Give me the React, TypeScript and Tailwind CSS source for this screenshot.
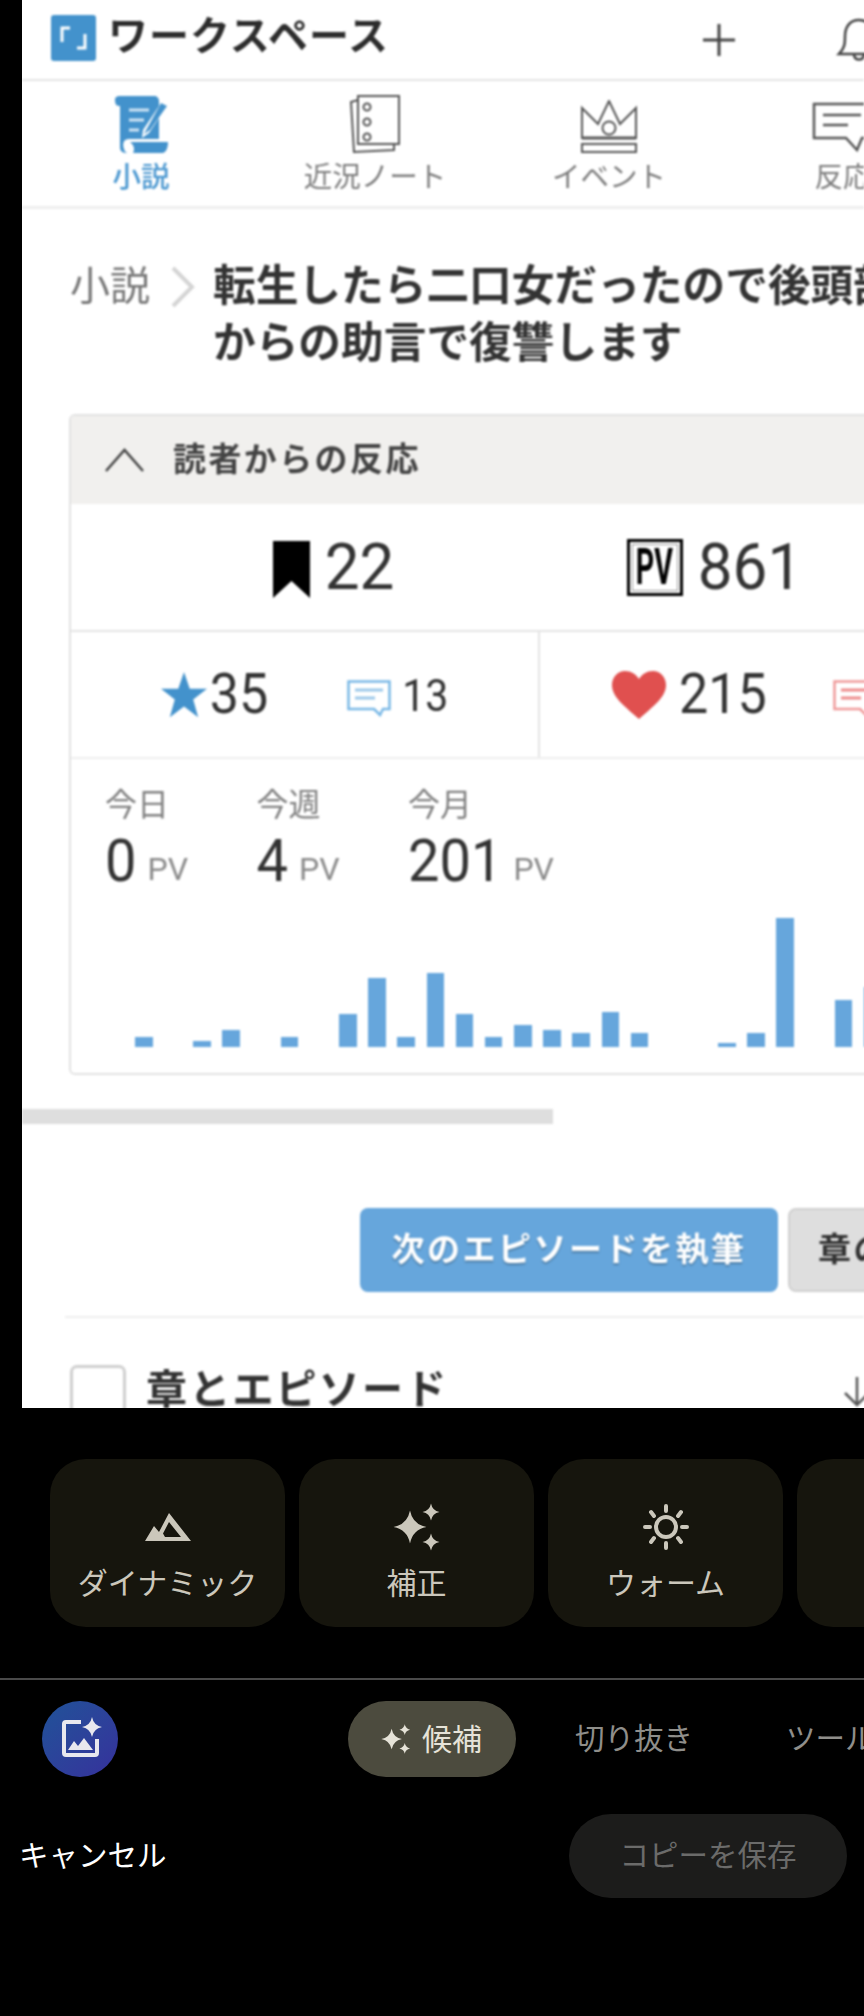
import React from 'react';

const barHeights = [10, 0, 6, 17, 0, 10, 0, 33, 69, 10, 74, 33, 10, 22, 17, 14, 35, 14, 0, 0, 4, 14, 129, 0, 47, 60];

const stats = [
  { label: '今日', value: '0' },
  { label: '今週', value: '4' },
  { label: '今月', value: '201' },
];

const star = (cx: number, cy: number, r: number) =>
  `M${cx} ${cy - r}Q${cx + r * 0.16} ${cy - r * 0.16} ${cx + r} ${cy}Q${cx + r * 0.16} ${cy + r * 0.16} ${cx} ${cy + r}Q${cx - r * 0.16} ${cy + r * 0.16} ${cx - r} ${cy}Q${cx - r * 0.16} ${cy - r * 0.16} ${cx} ${cy - r}Z`;

const Sparkles: React.FC<{ size: number; color: string }> = ({ size, color }) => (
  <svg width={size} height={size} viewBox="0 0 48 48" fill={color}>
    <path d={star(17, 24, 16.5)} />
    <path d={star(38, 9, 8.5)} />
    <path d={star(38, 39, 8.5)} />
  </svg>
);

const ChatIcon: React.FC<{ color: string; light: string }> = ({ color, light }) => (
  <svg width="44" height="37" viewBox="0 0 44 37" fill="none">
    <path d="M1.5 1.5H42.5V29H36L33 35L27 29H1.5Z" stroke={color} strokeWidth="2.5" fill="#fff" />
    <path d="M8 10H36M8 18H28" stroke={light} strokeWidth="3" />
  </svg>
);

const TabLabel: React.FC<{ text: string; active?: boolean; icon: React.ReactNode }> = ({ text, active, icon }) => (
  <div className="w-[234px] shrink-0 flex flex-col items-center">
    <div className="h-[66px] flex items-end">{icon}</div>
    <div className={`mt-[6px] text-[28.5px] leading-[36px] whitespace-nowrap ${active ? 'text-[#4a97d0] font-medium' : 'text-[#7c7c7c]'}`}>{text}</div>
  </div>
);

const Chip: React.FC<{ label: string; icon?: React.ReactNode }> = ({ label, icon }) => (
  <div className="w-[235px] h-[168px] shrink-0 rounded-[36px] bg-[#16150d] flex flex-col items-center">
    <div className="h-[48px] mt-[44px] flex items-center justify-center">{icon}</div>
    <div className="mt-[14px] text-[30px] leading-[38px] text-[#cbc7bb] whitespace-nowrap">{label}</div>
  </div>
);

export default function App() {
  return (
    <div className="w-[864px] h-[2016px] bg-black overflow-hidden font-['Roboto','Noto_Sans_CJK_JP',sans-serif]">
      {/* screenshot being edited */}
      <div className="ml-[22px] w-[842px] h-[1408px] bg-white overflow-hidden">
        <div className="blur-[0.8px]">
          <div className="h-[81px] border-b-2 border-[#e4e4e4] flex items-center pl-[29px]">
            <div className="w-[45px] h-[46px] mb-[4px] rounded-[3px] bg-[#4392cc] shrink-0">
              <svg width="45" height="46" viewBox="0 0 45 46" fill="none" stroke="#fff" strokeWidth="3">
                <path d="M19 13H11V27M26 33H34V19" />
              </svg>
            </div>
            <div className="ml-[12px] w-[282px] mb-[6px] text-[40px] leading-[48px] tracking-[1px] font-bold text-[#2c2c2c] whitespace-nowrap">ワークスペース</div>
            <svg className="ml-[313px] shrink-0" width="34" height="34" viewBox="0 0 34 34" stroke="#444" strokeWidth="3">
              <path d="M17 1V33M1 17H33" />
            </svg>
            <svg className="ml-[100px] shrink-0" width="46" height="46" viewBox="0 0 46 46" fill="none" stroke="#444" strokeWidth="2.5">
              <path d="M3 37C9 31 9 26 9 19C9 10 14 3 23 3C32 3 37 10 37 19C37 26 37 31 43 37ZM18 38C19 44 27 44 28 38" />
            </svg>
          </div>

          <div className="h-[128px] border-b-[3px] border-[#eeeeee] flex pl-[2px] pt-[7px] overflow-hidden">
            <TabLabel
              text="小説"
              active
              icon={
                <svg width="56" height="58" viewBox="0 0 56 58" fill="#4392cc">
                  <path d="M2 4C2 1 4 0 7 0H41C44 0 46 2 46 5V10L30 34L29 42L36 37L46 22V43H16C11 43 9 47 11 53C12 56 13 57 15 57C9 57 7 55 7 51V10H6C3 10 2 7 2 4Z" />
                  <path d="M17 46H55C55 50 54 57 49 57H20C22 53 21 49 17 46Z" />
                  <path d="M48 7L54 10L37 34L31 38Z" />
                  <path d="M16 14H36M16 24H31M16 34H26" stroke="#cfe4f4" strokeWidth="3" />
                </svg>
              }
            />
            <TabLabel
              text="近況ノート"
              icon={
                <svg width="54" height="60" viewBox="0 0 54 60" fill="none" stroke="#555" strokeWidth="2">
                  <path d="M10 2H51V50H10ZM10 6L3 8L6 58L46 56V50" />
                  <circle cx="19" cy="13" r="3.5" />
                  <circle cx="19" cy="28" r="3.5" />
                  <circle cx="19" cy="43" r="3.5" />
                </svg>
              }
            />
            <TabLabel
              text="イベント"
              icon={
                <svg width="56" height="54" viewBox="0 0 56 54" fill="none" stroke="#555" strokeWidth="2">
                  <path d="M1 8L17 24L28 1L39 24L55 8V38H1Z" />
                  <circle cx="28" cy="28" r="6.5" />
                  <path d="M1 38H55" strokeWidth="3" />
                  <path d="M1 44H55V52H1Z" />
                </svg>
              }
            />
            <TabLabel
              text="反応"
              icon={
                <svg width="62" height="52" viewBox="0 0 62 52" fill="none" stroke="#555" strokeWidth="2.5">
                  <path d="M2 2H60V36H50L45 48L34 36H2Z" />
                  <path d="M11 13H49M11 23H36" />
                </svg>
              }
            />
          </div>

          <div className="pt-[49px] pl-[48px] flex items-start whitespace-nowrap">
            <div className="text-[40px] leading-[57px] text-[#777777]">小説</div>
            <svg className="ml-[20px] mt-[8px] shrink-0" width="25" height="42" viewBox="0 0 25 42" fill="none" stroke="#d4d4d4" strokeWidth="4">
              <path d="M3 2L22 21L3 40" />
            </svg>
            <div className="ml-[18px] text-[42.7px] leading-[57px] font-bold text-[#333333]">
              <div>転生したら二口女だったので後頭部</div>
              <div>からの助言で復讐します</div>
            </div>
          </div>

          <div className="mt-[42px] ml-[47px] w-[900px] rounded-md border-2 border-[#e2e2e2] overflow-hidden">
            <div className="h-[88px] bg-[#f1f0ee] flex items-center pl-[33px]">
              <svg width="41" height="24" viewBox="0 0 41 24" fill="none" stroke="#444" strokeWidth="2.5">
                <path d="M2 23L20.5 2L39 23" />
              </svg>
              <div className="ml-[28px] text-[33px] leading-[40px] tracking-[2.4px] font-bold text-[#444444]">読者からの反応</div>
            </div>

            <div className="h-[128px] border-b-2 border-[#e4e4e4] pl-[76px] grid grid-cols-[377px_381px]">
              <div className="flex items-center justify-center text-[62px] text-[#333333]">
                <svg className="mt-[4px] -ml-[4px]" width="37" height="57" viewBox="0 0 37 57" fill="#000">
                  <path d="M0 0H37V57L18.5 40L0 57Z" />
                </svg>
                <span className="ml-[15px] leading-none inline-block scale-y-[1.06]">22</span>
              </div>
              <div className="flex items-center justify-center text-[62px] text-[#333333]">
                <div className="w-[56px] h-[57px] border-[3px] border-black p-[2px]">
                  <div className="w-full h-full border border-[#999999] flex items-center justify-center">
                    <span className="text-[42px] leading-none font-bold text-black inline-block scale-x-[0.68] scale-y-[1.2] whitespace-nowrap">PV</span>
                  </div>
                </div>
                <span className="ml-[15px] leading-none inline-block scale-y-[1.06]">861</span>
              </div>
            </div>

            <div className="h-[127px] border-b-2 border-[#eeeeee] flex">
              <div className="w-[469px] shrink-0 border-r-2 border-[#e4e4e4] flex items-center justify-center text-[#333333]">
                <svg width="46" height="46" viewBox="0 0 24 24" fill="#4392cc">
                  <path d="M12 0L15 8.8H24L16.8 14.4L19.4 23.6L12 18L4.6 23.6L7.2 14.4L0 8.8H9Z" />
                </svg>
                <span className="ml-[3px] text-[52px] leading-none inline-block scale-y-[1.06]">35</span>
                <span className="ml-[79px] mt-[8px]">
                  <ChatIcon color="#79b8e6" light="#9cc9ea" />
                </span>
                <span className="ml-[11px] mt-[4px] text-[41px] leading-none inline-block scale-y-[1.06]">13</span>
              </div>
              <div className="pl-[71px] flex items-center text-[#333333]">
                <svg width="56" height="48" viewBox="0 0 56 48" fill="#e0504f">
                  <path d="M28 48C16 37 1 27 1 14C1 6 7 0 14 0C20 0 25 3 28 8C31 3 36 0 42 0C49 0 55 6 55 14C55 27 40 37 28 48Z" />
                </svg>
                <span className="ml-[12px] text-[52px] leading-none inline-block scale-y-[1.06]">215</span>
                <span className="ml-[66px] mt-[8px]">
                  <ChatIcon color="#f09a9a" light="#ee8c8c" />
                </span>
              </div>
            </div>

            <div className="h-[314px] pl-[34px] pb-[26px] flex flex-col justify-between">
              <div className="flex pt-[28px]">
                {stats.map(s => (
                  <div key={s.label} className="w-[151.5px] shrink-0">
                    <div className="text-[32px] leading-[36px] text-[#808080]">{s.label}</div>
                    <div className="mt-[8px] flex items-baseline leading-[60px] whitespace-nowrap">
                      <span className="text-[56px] text-[#333333] inline-block scale-y-[1.06]">{s.value}</span>
                      <span className="ml-[11px] text-[32px] text-[#8a8a8a]">PV</span>
                    </div>
                  </div>
                ))}
              </div>
              <div className="ml-[30px] h-[130px] flex items-end gap-[11.67px]">
                {barHeights.map((h, i) => (
                  <div key={i} className="w-[17.5px] shrink-0 bg-[#66a6dc]" style={{ height: h }} />
                ))}
              </div>
            </div>
          </div>

          <div className="mt-[34px] w-[531px] h-[15px] bg-[#dedede]" />

          <div className="mt-[84px] pl-[338px] flex gap-[10px] whitespace-nowrap">
            <div className="w-[418px] h-[84px] shrink-0 rounded-[8px] bg-[#66a6dc] flex items-center justify-center text-[33px] tracking-[2.5px] font-bold text-white [text-shadow:0_2px_2px_rgba(0,0,0,0.25)]">
              次のエピソードを執筆
            </div>
            <div className="w-[300px] h-[84px] shrink-0 rounded-[8px] bg-[#dedede] border-2 border-[#d0d0d0] pl-[28px] flex items-center text-[33px] tracking-[2.5px] font-bold text-[#333333]">
              章の追加
            </div>
          </div>

          <div className="mt-[24px] ml-[43px] h-[2px] bg-[#eeeeee]" />

          <div className="mt-[47px] pl-[48px] w-[849px] flex items-start">
            <div className="w-[56px] h-[56px] shrink-0 rounded-[7px] border-[3px] border-[#cfcfcf]" />
            <div className="ml-[20px] text-[41px] leading-[50px] tracking-[2.2px] font-bold text-[#333333] whitespace-nowrap">章とエピソード</div>
            <svg className="ml-auto mt-[12px] shrink-0" width="28" height="30" viewBox="0 0 28 30" fill="none" stroke="#555" strokeWidth="2.5">
              <path d="M14 0V28M2 16L14 28L26 16" />
            </svg>
          </div>
        </div>
      </div>

      {/* editor chrome */}
      <div className="pt-[51px] pl-[50px] flex gap-[14px] overflow-hidden">
        <Chip
          label="ダイナミック"
          icon={
            <svg width="46" height="28" viewBox="0 0 46 28" fill="#cbc7bb">
              <path d="M0 28L9 13L14 19L24 0L46 28ZM13 24H36L24 9L18 20.5L20 24Z" fillRule="evenodd" />
            </svg>
          }
        />
        <Chip label="補正" icon={<Sparkles size={48} color="#cbc7bb" />} />
        <Chip
          label="ウォーム"
          icon={
            <svg width="48" height="48" viewBox="0 0 48 48" fill="none" stroke="#cbc7bb" strokeWidth="4" strokeLinecap="round">
              <circle cx="24" cy="24" r="10" />
              <path d="M24 3V8M24 40V45M3 24H8M40 24H45M9 9L12 13M39 9L36 13M9 39L12 35M39 39L36 35" />
            </svg>
          }
        />
        <Chip label="" />
      </div>

      <div className="mt-[51px] h-[2px] bg-[#4a4a4a]" />

      <div className="mt-[21px] pl-[42px] flex items-center whitespace-nowrap overflow-hidden">
        <div className="w-[76px] h-[76px] shrink-0 rounded-full bg-gradient-to-br from-[#1e5298] to-[#35309c] flex items-center justify-center">
          <svg width="44" height="44" viewBox="0 0 44 44" fill="none">
            <path d="M23 5H8A2 2 0 0 0 6 7V36A2 2 0 0 0 8 38H37A2 2 0 0 0 39 36V22" stroke="#e8e8ee" strokeWidth="4" />
            <path d="M10 33L16 24L20 29L26 21L35 33Z" fill="#e8e8ee" />
            <path d={star(34, 10, 10)} fill="#e8e8ee" />
          </svg>
        </div>
        <div className="ml-[230px] w-[168px] h-[76px] shrink-0 rounded-full bg-[#4c4b3e] pl-[33px] flex items-center">
          <Sparkles size={30} color="#e6e3d8" />
          <span className="ml-[11px] text-[30px] text-[#e6e3d8]">候補</span>
        </div>
        <span className="ml-[59px] text-[29.5px] text-[#8f8e8a]">切り抜き</span>
        <span className="ml-[93px] text-[29.5px] text-[#8f8e8a]">ツール</span>
      </div>

      <div className="mt-[37px] pl-[19px] pr-[17px] flex items-center justify-between">
        <span className="text-[29.5px] text-white">キャンセル</span>
        <div className="w-[278px] h-[84px] rounded-full bg-[#1c1c1b] flex items-center justify-center text-[29.5px] text-[#6b6b6a]">コピーを保存</div>
      </div>
    </div>
  );
}
